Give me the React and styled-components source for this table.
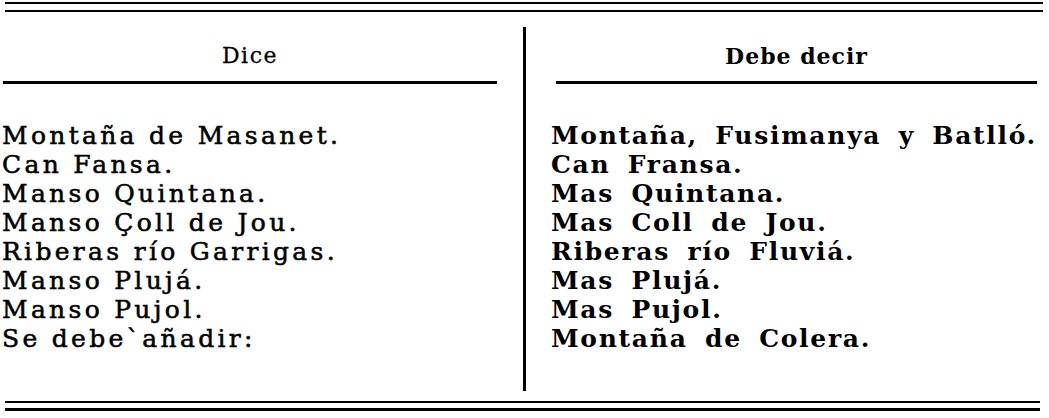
import React from "react";
import styled, { createGlobalStyle } from "styled-components";

const GlobalStyle = createGlobalStyle`
  html, body {
    margin: 0;
    padding: 0;
    background: #fff;
  }
  body {
    font-family: "DejaVu Serif", "Liberation Serif", serif;
    color: #000;
  }
`;

const Page = styled.div`
  width: 1049px;
  height: 418px;
  padding-top: 2px;
  box-sizing: border-box;
  background: #fff;
`;

const DoubleRule = styled.div`
  margin: 0 ${(p) => p.$right}px 0 5px;
  height: ${(p) => p.$gap}px;
  border-top: 2px solid #000;
  border-bottom: ${(p) => p.$bottom}px solid #000;
`;

const Table = styled.div`
  display: grid;
  grid-template-columns: 523px 3px 1fr;
  margin-top: ${(p) => p.$top}px;
  margin-bottom: 10px;
`;

const Divider = styled.div`
  background: #000;
`;

const Column = styled.div`
  display: flex;
  flex-direction: column;
  padding: 14px ${(p) => p.$right}px 38px ${(p) => p.$left}px;
`;

const Heading = styled.div`
  text-align: center;
  font-size: 22px;
  line-height: 30px;
  letter-spacing: ${(p) => p.$spacing}px;
  font-weight: ${(p) => (p.$bold ? 700 : 400)};
  -webkit-text-stroke: ${(p) => (p.$bold ? 0 : 0.3)}px #000;
`;

const Underline = styled.div`
  height: 3px;
  background: #000;
  margin: 10px 0 37px;
`;

const Entries = styled.div`
  display: flex;
  flex-direction: column;
  margin-left: ${(p) => p.$indent}px;
`;

const Entry = styled.div`
  font-size: 25px;
  line-height: 29px;
  white-space: nowrap;
  letter-spacing: ${(p) => p.$spacing}px;
  word-spacing: ${(p) => p.$words}px;
  font-weight: ${(p) => (p.$bold ? 700 : 400)};
  -webkit-text-stroke: ${(p) => (p.$bold ? 0 : 0.55)}px #000;
`;

const dice = [
  "Montaña de Masanet.",
  "Can Fansa.",
  "Manso Quintana.",
  "Manso Çoll de Jou.",
  "Riberas río Garrigas.",
  "Manso Plujá.",
  "Manso Pujol.",
  "Se debe`añadir:",
];

const debeDecir = [
  "Montaña, Fusimanya y Batlló.",
  "Can Fransa.",
  "Mas Quintana.",
  "Mas Coll de Jou.",
  "Riberas río Fluviá.",
  "Mas Plujá.",
  "Mas Pujol.",
  "Montaña de Colera.",
];

const App = () => (
  <Page>
    <GlobalStyle />
    <DoubleRule $gap={6} $bottom={2} $right={6} />
    <Table $top={15}>
      <Column $left={3} $right={26}>
        <Heading $spacing={1.5}>Dice</Heading>
        <Underline />
        <Entries $indent={-1}>
          {dice.map((line) => (
            <Entry key={line} $spacing={3.3} $words={0}>
              {line}
            </Entry>
          ))}
        </Entries>
      </Column>
      <Divider />
      <Column $left={30} $right={17}>
        <Heading $spacing={1} $bold>
          Debe decir
        </Heading>
        <Underline />
        <Entries $indent={-5}>
          {debeDecir.map((line) => (
            <Entry key={line} $spacing={1.7} $words={7} $bold>
              {line}
            </Entry>
          ))}
        </Entries>
      </Column>
    </Table>
    <DoubleRule $gap={5} $bottom={3} $right={9} />
  </Page>
);

export default App;
